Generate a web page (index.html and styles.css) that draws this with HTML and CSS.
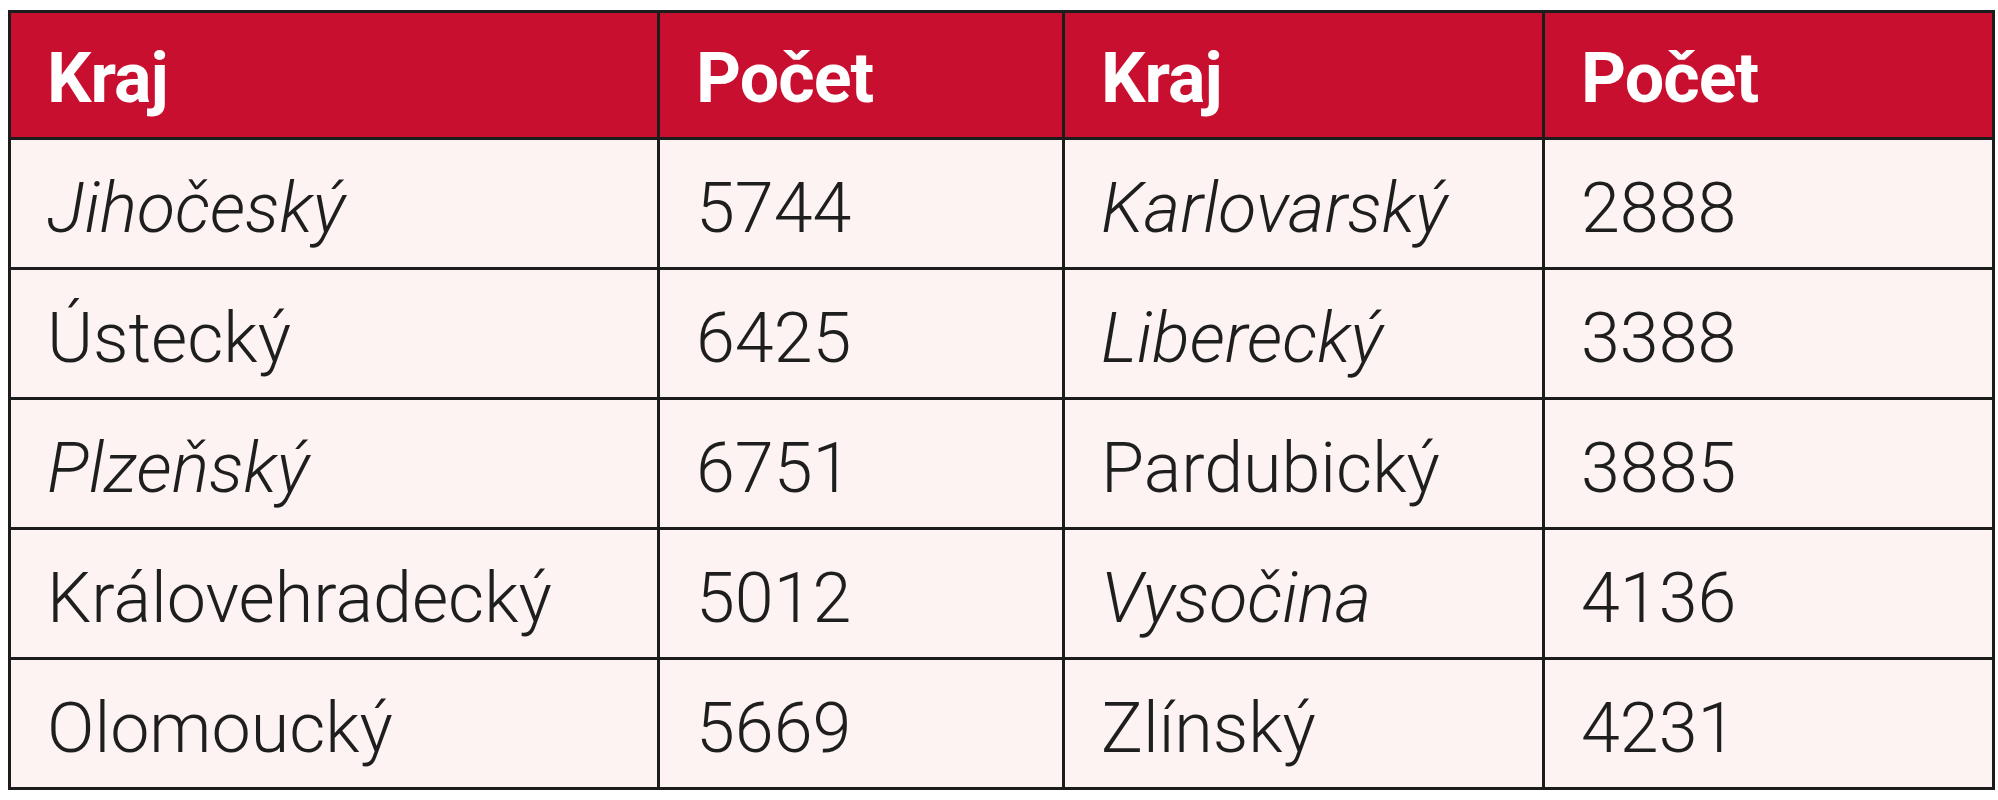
FILE: index.html
```html
<!DOCTYPE html>
<html lang="cs">
<head>
<meta charset="utf-8">
<title>Kraj – Počet</title>
<link rel="stylesheet" href="styles.css">
</head>
<body>
<div class="page">
  <table class="data">
    <colgroup>
      <col class="c1">
      <col class="c2">
      <col class="c3">
      <col class="c4">
    </colgroup>
    <thead>
      <tr>
        <th>Kraj</th>
        <th>Počet</th>
        <th>Kraj</th>
        <th>Počet</th>
      </tr>
    </thead>
    <tbody>
      <tr>
        <td class="it">Jihočeský</td>
        <td>5744</td>
        <td class="it">Karlovarský</td>
        <td>2888</td>
      </tr>
      <tr>
        <td>Ústecký</td>
        <td>6425</td>
        <td class="it">Liberecký</td>
        <td>3388</td>
      </tr>
      <tr>
        <td class="it">Plzeňský</td>
        <td>6751</td>
        <td>Pardubický</td>
        <td>3885</td>
      </tr>
      <tr>
        <td>Královehradecký</td>
        <td>5012</td>
        <td class="it">Vysočina</td>
        <td>4136</td>
      </tr>
      <tr>
        <td>Olomoucký</td>
        <td>5669</td>
        <td>Zlínský</td>
        <td>4231</td>
      </tr>
    </tbody>
  </table>
</div>
</body>
</html>
```

FILE: styles.css
```css
html, body {
  margin: 0;
  padding: 0;
  background: #ffffff;
}

.page {
  padding: 10px 0 0 8px;
}

.data {
  border-collapse: collapse;
  table-layout: fixed;
  width: 1984px;
  font-family: Roboto, "Liberation Sans", sans-serif;
}

.c1 { width: 649px; }
.c2 { width: 405px; }
.c3 { width: 480px; }
.c4 { width: 450px; }

.data th,
.data td {
  border: 3px solid #1c1c1c;
  text-align: left;
  padding: 0 0 0 36px;
  font-size: 70px;
  line-height: 1;
  white-space: nowrap;
}

.data th {
  background: #c90f2f;
  color: #ffffff;
  font-weight: 700;
  letter-spacing: -1px;
  height: 118px;
  padding-top: 6px;
}

.data td {
  background: #fcf3f2;
  color: #1e1e1e;
  font-weight: 300;
  height: 119px;
  padding-top: 8px;
}

.data td.it {
  font-style: italic;
}
```
